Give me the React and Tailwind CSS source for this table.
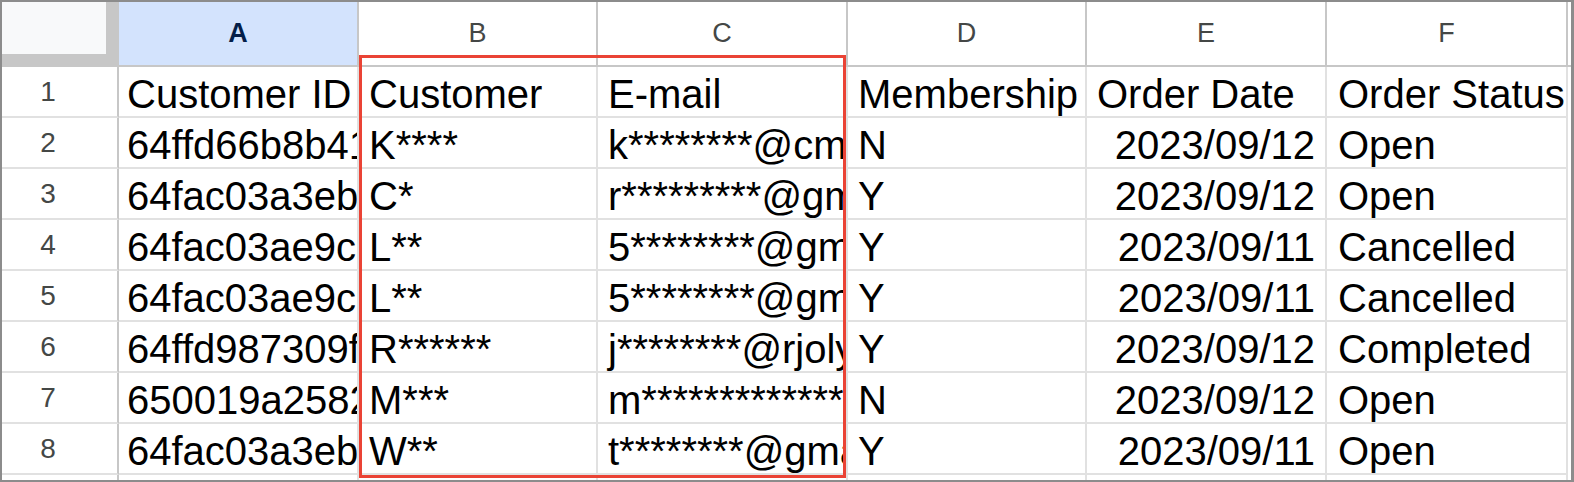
import React from "react"

const cols = [
  { key: "A", w: "w-[240px]", pad: "pl-[8px]" },
  { key: "B", w: "w-[239px]", pad: "pl-[10px]" },
  { key: "C", w: "w-[250px]", pad: "pl-[10px]" },
  { key: "D", w: "w-[239px]", pad: "pl-[10px]" },
  { key: "E", w: "w-[240px]", pad: "pl-[10px]", right: true },
  { key: "F", w: "w-[241px]", pad: "pl-[11px]" },
]

const rows = [
  ["Customer ID", "Customer", "E-mail", "Membership", "Order Date", "Order Status"],
  ["64ffd66b8b41a2c3", "K****", "k********@cmail.com", "N", "2023/09/12", "Open"],
  ["64fac03a3eb2d1f0", "C*", "r*********@gmail.com", "Y", "2023/09/12", "Open"],
  ["64fac03ae9c7b5e1", "L**", "5********@gmail.com", "Y", "2023/09/11", "Cancelled"],
  ["64fac03ae9c7b5e2", "L**", "5********@gmail.com", "Y", "2023/09/11", "Cancelled"],
  ["64ffd987309f1e4a", "R******", "j********@rjoly.com", "Y", "2023/09/12", "Completed"],
  ["650019a25823cd7b", "M***", "m*************@gmail.com", "N", "2023/09/12", "Open"],
  ["64fac03a3eb8a9e3", "W**", "t********@gmail.com", "Y", "2023/09/11", "Open"],
]

const font = { fontFamily: '"Liberation Sans", Arial, sans-serif' }

const App = () => {
  return (
    <div
      className="relative w-[1574px] h-[482px] overflow-hidden bg-white border-t-2 border-l-2 border-b-2 border-r-[3px] border-[#8c8c8c]"
      style={font}
    >
      {/* Column header row */}
      <div className="flex h-[65px] border-b-2 border-[#c7c7c7]">
        <div className="w-[117px] h-[63px] shrink-0 bg-[#c7c7c7]">
          <div className="w-[104px] h-[52px] bg-[#f8f9fa]" />
        </div>
        {cols.map((c) => (
          <div
            key={c.key}
            className={`${c.w} shrink-0 flex items-center justify-center border-r-2 border-[#c7c7c7] text-[27px] ${
              c.key === "A" ? "bg-[#d3e3fd] text-[#041e49] font-bold" : "text-[#444746]"
            }`}
          >
            {c.key}
          </div>
        ))}
      </div>

      {/* Data rows */}
      {[...rows, null].map((row, i) => (
        <div key={i} className="flex h-[51px]">
          <div className="w-[117px] shrink-0 flex items-center justify-center pr-[23px] border-r-2 border-b-2 border-r-[#c7c7c7] border-b-[#e1e1e1] text-[28px] text-[#444746]">
            {row ? i + 1 : ""}
          </div>
          {cols.map((c, j) => (
            <div
              key={c.key}
              className={`${c.w} shrink-0 h-[51px] overflow-hidden flex items-end border-r-2 border-b-2 border-[#e1e1e1] text-[40px] text-black whitespace-nowrap ${
                c.right && i > 0 ? "justify-end pr-[10px]" : c.pad
              }`}
            >
              <span className="block leading-[44px]">{row ? row[j] : ""}</span>
            </div>
          ))}
        </div>
      ))}

      {/* Highlight box over columns B and C */}
      <div className="absolute left-[357px] top-[53px] w-[487px] h-[423px] border-[3px] border-[#ea4335] pointer-events-none" />
    </div>
  )
}

export default App
